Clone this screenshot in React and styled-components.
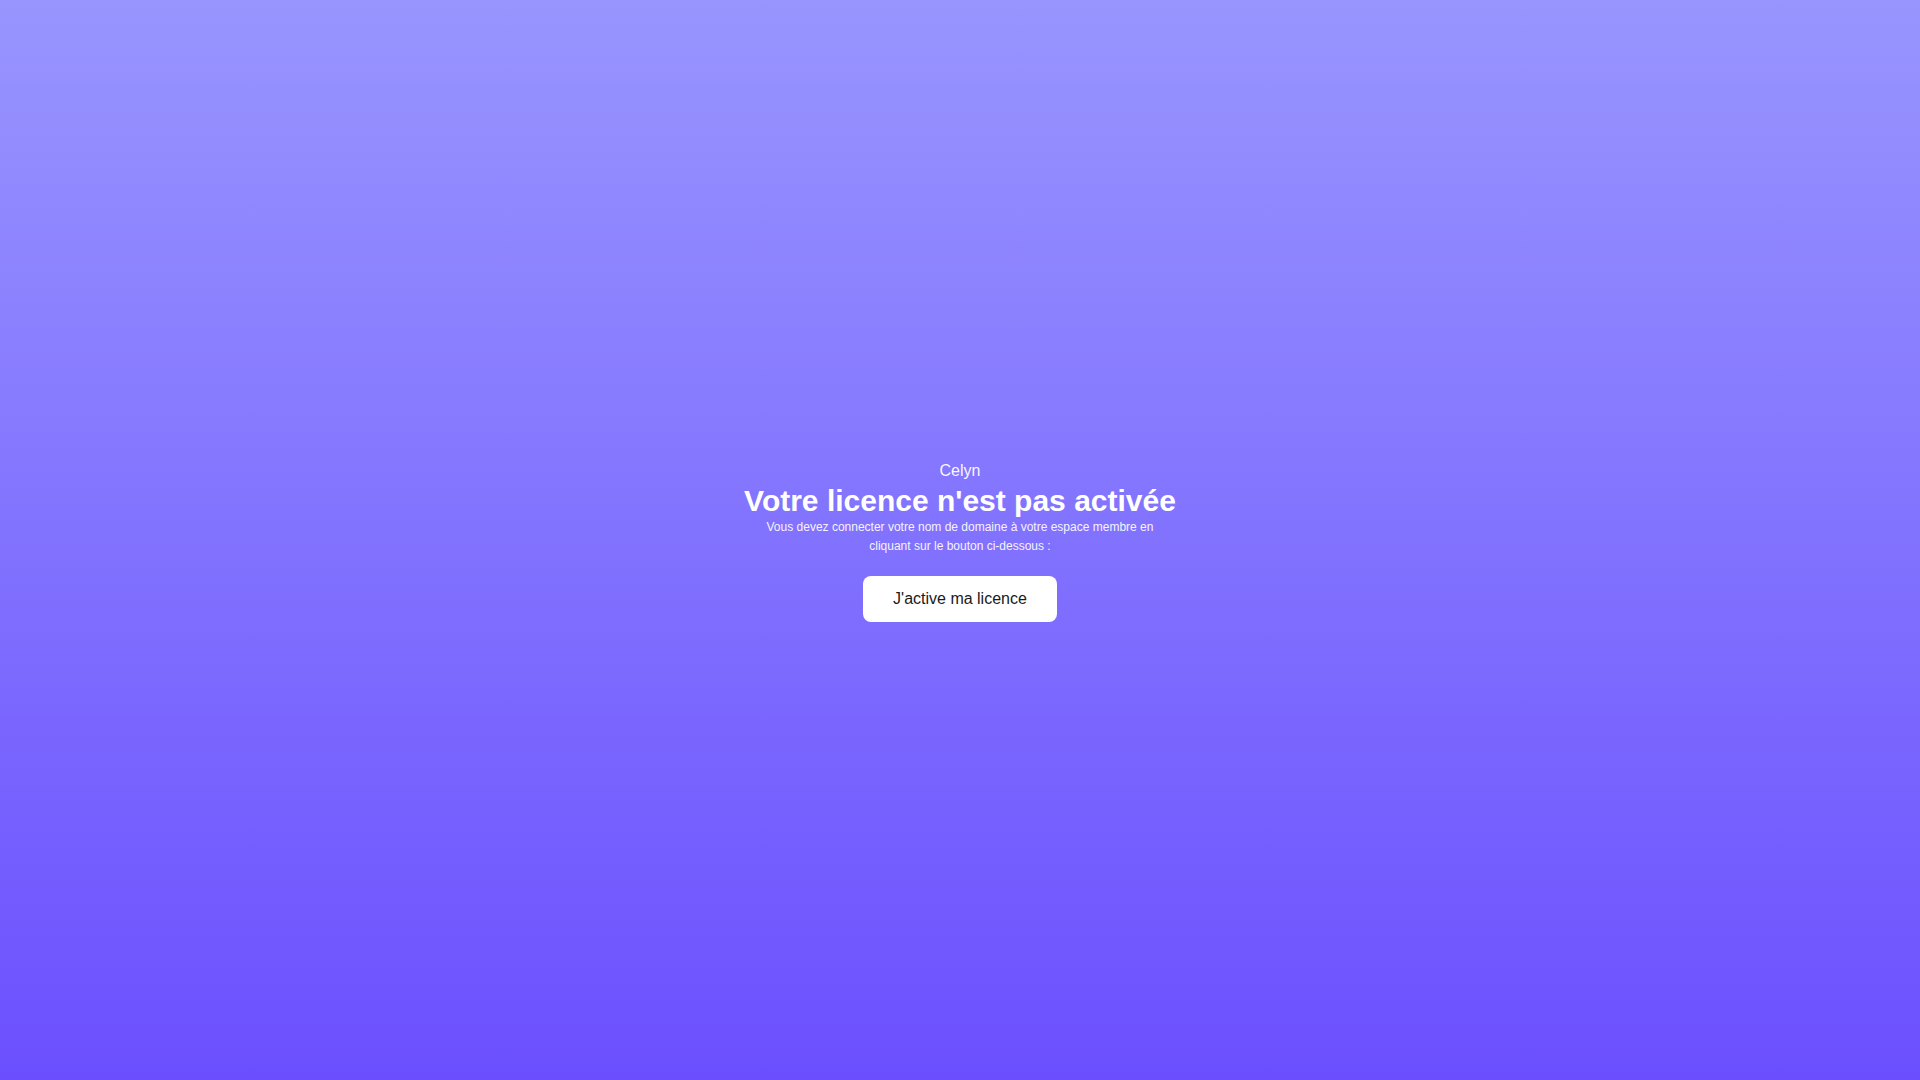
import styled, { createGlobalStyle } from "styled-components";

const GlobalStyle = createGlobalStyle`
  html, body {
    margin: 0;
    padding: 0;
    height: 100%;
  }
  body {
    font-family: "Liberation Sans", Arial, sans-serif;
  }
  #root {
    height: 100%;
  }
`;

const Page = styled.main`
  min-height: 100vh;
  display: flex;
  align-items: center;
  justify-content: center;
  background: linear-gradient(180deg, #9895fe 0%, #6b4ffe 100%);
  color: #fff;
`;

const Box = styled.div`
  display: flex;
  flex-direction: column;
  align-items: center;
  text-align: center;
  padding-top: 3px;
`;

const Brand = styled.div`
  font-size: 16px;
  line-height: 20px;
  opacity: 0.95;
`;

const Title = styled.h1`
  margin: 4px 0 1px;
  font-size: 30px;
  line-height: 32px;
  font-weight: 700;
`;

const Text = styled.p`
  margin: 0;
  max-width: 400px;
  font-size: 12px;
  line-height: 19px;
  opacity: 0.92;
`;

const Button = styled.button`
  margin-top: 20px;
  width: 194px;
  height: 46px;
  border: none;
  border-radius: 8px;
  background: #fff;
  color: #1a1a1a;
  font-family: inherit;
  font-size: 16px;
  cursor: pointer;
`;

export default function App() {
  return (
    <>
      <GlobalStyle />
      <Page>
        <Box>
          <Brand>Celyn</Brand>
          <Title>Votre licence n'est pas activée</Title>
          <Text>
            Vous devez connecter votre nom de domaine à votre espace membre en
            cliquant sur le bouton ci-dessous :
          </Text>
          <Button>J'active ma licence</Button>
        </Box>
      </Page>
    </>
  );
}
